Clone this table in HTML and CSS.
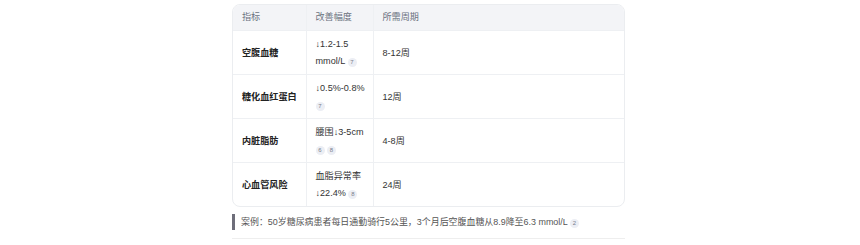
FILE: index.html
```html
<!DOCTYPE html>
<html lang="zh">
<head>
<meta charset="utf-8">
<link rel="stylesheet" href="styles.css">
</head>
<body>
<div class="page">
  <div class="table-wrap">
    <table class="data">
      <thead>
        <tr><th class="c1">指标</th><th class="c2">改善幅度</th><th class="c3">所需周期</th></tr>
      </thead>
      <tbody>
        <tr><td class="name">空腹血糖</td><td>↓1.2-1.5 mmol/L <span class="cite">7</span></td><td>8-12周</td></tr>
        <tr><td class="name">糖化血红蛋白</td><td>↓0.5%-0.8% <span class="cite">7</span></td><td>12周</td></tr>
        <tr><td class="name">内脏脂肪</td><td>腰围↓3-5cm <span class="cite">6</span> <span class="cite">8</span></td><td>4-8周</td></tr>
        <tr><td class="name">心血管风险</td><td>血脂异常率↓22.4% <span class="cite">8</span></td><td>24周</td></tr>
      </tbody>
    </table>
  </div>
  <blockquote class="case">案例：50岁糖尿病患者每日通勤骑行5公里，3个月后空腹血糖从8.9降至6.3 mmol/L <span class="cite">2</span></blockquote>
  <hr class="rule">
</div>
</body>
</html>
```
FILE: styles.css
```css
html, body {
  margin: 0;
  padding: 0;
  background: #ffffff;
}
body {
  font-family: "Liberation Sans", Arial, "Noto Sans CJK SC", sans-serif;
  color: #333333;
}
.page {
  width: 393px;
  margin: 0 auto;
  padding: 4px 3px 0 0;
}
.table-wrap {
  border: 1px solid #ebedf0;
  border-radius: 8px;
  overflow: hidden;
}
.data {
  width: 100%;
  border-collapse: collapse;
  font-size: 9.1px;
  line-height: 17px;
  table-layout: fixed;
}
.data th, .data td {
  box-sizing: border-box;
  padding: 5px 8px 4px 9px;
  text-align: left;
  vertical-align: middle;
  border-right: 1px solid #eef0f3;
  border-bottom: 1px solid #eef0f3;
}
.data th:last-child, .data td:last-child {
  border-right: none;
}
.data tbody tr:last-child td {
  border-bottom: none;
}
.data th {
  background: #f3f4f7;
  color: #6b7280;
  font-weight: normal;
  padding-top: 4px;
  padding-bottom: 4px;
}
.data .c1 { width: 73px; }
.data .c2 { width: 67px; }
.data td.name {
  font-weight: bold;
  color: #222222;
}
.cite {
  display: inline-block;
  min-width: 9px;
  height: 9px;
  line-height: 9px;
  border-radius: 5px;
  background: #eceef4;
  color: #7a7f8c;
  font-size: 6px;
  text-align: center;
  vertical-align: 0px;
}
.case {
  margin: 7px 0 0 0;
  padding: 0 0 0 6px;
  border-left: 3px solid #6e6e7a;
  color: #555555;
  font-size: 8.95px;
  line-height: 16px;
}
.rule {
  margin: 8px 0 0 0;
  border: none;
  border-top: 1px solid #eeeeee;
}
```
